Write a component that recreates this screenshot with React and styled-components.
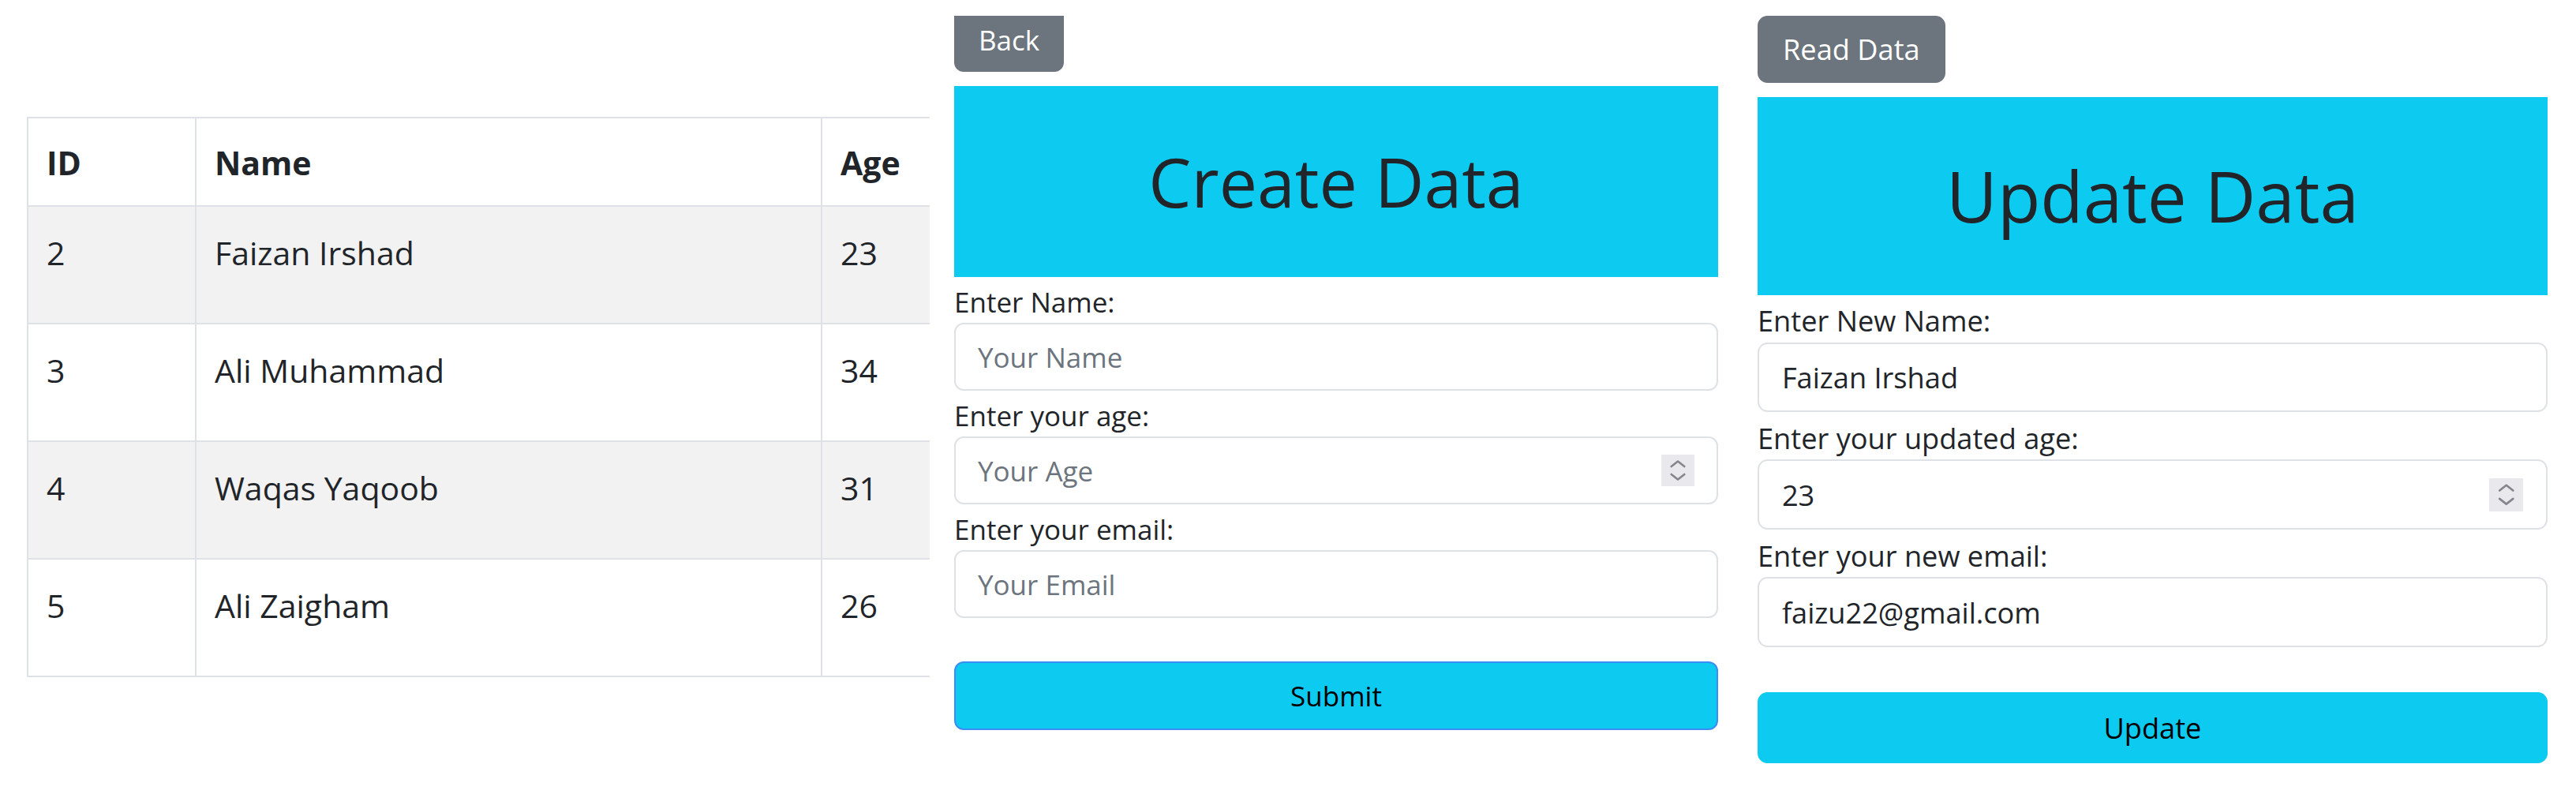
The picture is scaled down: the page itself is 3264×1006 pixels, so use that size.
import React from "react";
import styled, { createGlobalStyle, ThemeProvider } from "styled-components";

const GlobalStyle = createGlobalStyle`
  html, body {
    margin: 0;
    padding: 0;
    background: #fff;
  }
  body {
    font-family: "Open Sans", "Liberation Sans", sans-serif;
    color: #212529;
  }
  * {
    box-sizing: border-box;
  }
`;

// every size in the form panels is scaled by theme.s
const sz = (v) => ({ theme }) => `${(v * theme.s).toFixed(2)}px`;

const Page = styled.div`
  display: flex;
  align-items: flex-start;
  width: 3264px;
  height: 1006px;
  overflow: hidden;
`;

/* ---------- read table ---------- */

const TablePane = styled.div`
  flex: 0 0 1178px;
  overflow: hidden;
  padding: 148px 0 0 34px;
`;

const Table = styled.table`
  border-collapse: collapse;
  table-layout: fixed;
  width: 1406px;
  font-size: 41px;
  line-height: 1.5;
  color: #212529;
`;

const HeadCell = styled.th`
  width: ${(p) => p.$w}px;
  border: 2px solid #dee2e6;
  text-align: left;
  vertical-align: top;
  font-weight: 700;
  padding: 26px 23px 22px;
  white-space: nowrap;
`;

const Row = styled.tr`
  background: ${(p) => (p.$striped ? "#f2f2f2" : "#fff")};
`;

const Cell = styled.td`
  border: 2px solid #dee2e6;
  vertical-align: top;
  padding: 28px 23px 57.5px;
  white-space: nowrap;
`;

/* ---------- forms ---------- */

const FormPane = styled.section`
  flex: 0 0 ${sz(968)};
  margin-left: ${(p) => p.$gap}px;
  margin-top: 20px;
  overflow: hidden;
`;

const FormStack = styled.div`
  display: flex;
  flex-direction: column;
  margin-top: ${(p) => p.$lift}px;
`;

const NavButton = styled.button`
  align-self: flex-start;
  height: ${sz(82)};
  padding: 0 ${sz(31)};
  border: 0;
  border-radius: ${sz(12)};
  background: #6c757d;
  color: #fff;
  font-family: inherit;
  font-size: ${sz(35)};
  line-height: 1;
`;

const Banner = styled.div`
  margin-top: ${sz(18)};
  height: ${sz(242)};
  background: #0dcaf0;
  display: flex;
  align-items: center;
  justify-content: center;
`;

const BannerTitle = styled.h1`
  margin: 0;
  font-size: ${sz(86)};
  font-weight: 400;
  line-height: 1.2;
  color: #212529;
`;

const Label = styled.label`
  display: block;
  padding-top: ${sz(6)};
  font-size: ${sz(35)};
  line-height: ${sz(52)};
  color: #212529;
`;

const Field = styled.div`
  display: flex;
  align-items: center;
  height: ${sz(86)};
  padding: 0 ${sz(28)};
  border: 2px solid #dee2e6;
  border-radius: ${sz(12)};
  background: #fff;
`;

const Input = styled.input`
  flex: 1;
  min-width: 0;
  border: 0;
  outline: 0;
  padding: 0;
  background: transparent;
  font-family: inherit;
  font-size: ${sz(35)};
  color: #212529;
  &::placeholder {
    color: #6c757d;
    opacity: 1;
  }
`;

const Spinner = styled.div`
  flex: 0 0 ${sz(42)};
  height: ${sz(40)};
  background: #e9e9ed;
  display: flex;
  svg {
    width: 100%;
    height: 100%;
  }
`;

const SubmitButton = styled.button`
  margin-top: ${sz(55)};
  height: ${sz(87)};
  border: 2px solid ${(p) => (p.$focused ? "#3b8cf6" : "#0dcaf0")};
  border-radius: ${sz(12)};
  background: #0dcaf0;
  color: #000;
  font-family: inherit;
  font-size: ${sz(35)};
`;

const SpinIcon = () => (
  <svg viewBox="0 0 42 40">
    <polyline
      points="12.7,15 21,8.5 29.3,15"
      fill="none"
      stroke="#85858d"
      strokeWidth="2.6"
      strokeLinecap="round"
      strokeLinejoin="round"
    />
    <polyline
      points="12.7,25 21,31.5 29.3,25"
      fill="none"
      stroke="#85858d"
      strokeWidth="2.6"
      strokeLinecap="round"
      strokeLinejoin="round"
    />
  </svg>
);

const users = [
  { id: 2, name: "Faizan Irshad", age: 23 },
  { id: 3, name: "Ali Muhammad", age: 34 },
  { id: 4, name: "Waqas Yaqoob", age: 31 },
  { id: 5, name: "Ali Zaigham", age: 26 },
];

const FormPanel = ({ scale, gap, lift, nav, title, fields, action, focused }) => (
  <ThemeProvider theme={{ s: scale }}>
    <FormPane $gap={gap}>
      <FormStack $lift={lift}>
        <NavButton type="button">{nav}</NavButton>
        <Banner>
          <BannerTitle>{title}</BannerTitle>
        </Banner>
        {fields.map((f) => (
          <React.Fragment key={f.label}>
            <Label>{f.label}</Label>
            <Field>
              <Input
                type="text"
                readOnly
                placeholder={f.placeholder}
                value={f.value ?? ""}
              />
              {f.number && (
                <Spinner>
                  <SpinIcon />
                </Spinner>
              )}
            </Field>
          </React.Fragment>
        ))}
        <SubmitButton type="button" $focused={focused}>
          {action}
        </SubmitButton>
      </FormStack>
    </FormPane>
  </ThemeProvider>
);

export default function App() {
  return (
    <>
      <GlobalStyle />
      <Page>
        <TablePane>
          <Table>
            <thead>
              <tr>
                <HeadCell $w={213}>ID</HeadCell>
                <HeadCell $w={793}>Name</HeadCell>
                <HeadCell $w={400}>Age</HeadCell>
              </tr>
            </thead>
            <tbody>
              {users.map((u, i) => (
                <Row key={u.id} $striped={i % 2 === 0}>
                  <Cell>{u.id}</Cell>
                  <Cell>{u.name}</Cell>
                  <Cell>{u.age}</Cell>
                </Row>
              ))}
            </tbody>
          </Table>
        </TablePane>

        <FormPanel
          scale={1}
          gap={31}
          lift={-11}
          nav="Back"
          title="Create Data"
          action="Submit"
          focused
          fields={[
            { label: "Enter Name:", placeholder: "Your Name" },
            { label: "Enter your age:", placeholder: "Your Age", number: true },
            { label: "Enter your email:", placeholder: "Your Email" },
          ]}
        />

        <FormPanel
          scale={1.034}
          gap={50}
          lift={0}
          nav="Read Data"
          title="Update Data"
          action="Update"
          fields={[
            { label: "Enter New Name:", value: "Faizan Irshad" },
            { label: "Enter your updated age:", value: "23", number: true },
            { label: "Enter your new email:", value: "faizu22@gmail.com" },
          ]}
        />
      </Page>
    </>
  );
}
